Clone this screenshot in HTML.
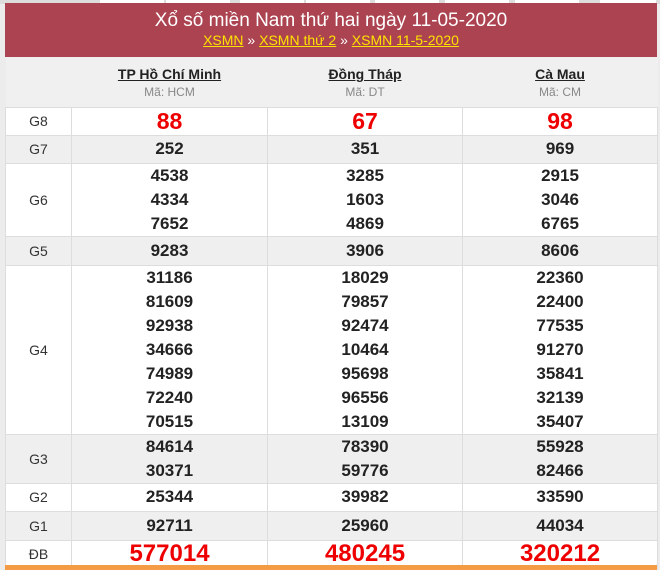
<!DOCTYPE html>
<html><head><meta charset="utf-8"><style>
*{margin:0;padding:0;box-sizing:border-box}
body{width:660px;height:570px;background:#ececec;font-family:"Liberation Sans",Arial,sans-serif;position:relative;overflow:hidden}
.tabs{position:absolute;top:0;left:0;width:660px;height:4px;background:#ddd}
.tabs i{position:absolute;top:0;height:3px;background:#fff}
.hd{position:absolute;left:5px;top:3px;width:652px;height:54px;background:#ac4350;text-align:center;color:#fff}
.hd .t{font-size:19px;line-height:20px;padding-top:8px}
.hd .l{font-size:14px;line-height:18px;color:#fff}
.hd .l a{color:#ffe300;text-decoration:underline}
table{position:absolute;left:5px;top:57px;width:652px;border-collapse:collapse;table-layout:fixed}
td{border:1px solid #ddd;text-align:center;vertical-align:middle;padding:0}
tr.g td{background:#efefef}
tr.w td{background:#fff}
td.lb{font-size:14px;color:#333;width:66px}
td.n{font-weight:bold;font-size:17px;color:#222;line-height:24px}
td.r{color:#e00;font-size:23px;font-weight:bold}
.th td{background:#f0f0f0;border:none;border-bottom:1px solid #ddd}
.th b{font-size:14px;color:#222;text-decoration:underline;display:block;line-height:18px;padding-top:3px}
.th span{font-size:12px;color:#888;line-height:16px}
.ob{position:absolute;left:5px;top:565px;width:652px;height:5px;background:#f39c45}
</style></head><body>
<div class="tabs"><i style="left:100px;width:64px"></i><i style="left:166px;width:64px"></i><i style="left:240px;width:64px"></i><i style="left:306px;width:64px"></i><i style="left:375px;width:64px"></i><i style="left:445px;width:64px"></i><i style="left:515px;width:64px"></i><i style="left:600px;width:56px"></i></div>
<div class="hd"><div class="t">Xổ số miền Nam thứ hai ngày 11-05-2020</div>
<div class="l"><a>XSMN</a> » <a>XSMN thứ 2</a> » <a>XSMN 11-5-2020</a></div></div>
<table>
<colgroup><col style="width:66px"><col style="width:196px"><col style="width:195px"><col style="width:195px"></colgroup>
<tr class="th" style="height:50px"><td></td><td><b>TP Hồ Chí Minh</b><span>Mã: HCM</span></td><td><b>Đồng Tháp</b><span>Mã: DT</span></td><td><b>Cà Mau</b><span>Mã: CM</span></td></tr>
<tr class="w" style="height:28px"><td class="lb">G8</td><td class="n r">88</td><td class="n r">67</td><td class="n r">98</td></tr>
<tr class="g" style="height:28px"><td class="lb">G7</td><td class="n">252</td><td class="n">351</td><td class="n">969</td></tr>
<tr class="w" style="height:73px"><td class="lb">G6</td><td class="n">4538<br>4334<br>7652</td><td class="n">3285<br>1603<br>4869</td><td class="n">2915<br>3046<br>6765</td></tr>
<tr class="g" style="height:29px"><td class="lb">G5</td><td class="n">9283</td><td class="n">3906</td><td class="n">8606</td></tr>
<tr class="w" style="height:166px"><td class="lb">G4</td><td class="n">31186<br>81609<br>92938<br>34666<br>74989<br>72240<br>70515</td><td class="n">18029<br>79857<br>92474<br>10464<br>95698<br>96556<br>13109</td><td class="n">22360<br>22400<br>77535<br>91270<br>35841<br>32139<br>35407</td></tr>
<tr class="g" style="height:49px"><td class="lb">G3</td><td class="n">84614<br>30371</td><td class="n">78390<br>59776</td><td class="n">55928<br>82466</td></tr>
<tr class="w" style="height:28px"><td class="lb">G2</td><td class="n">25344</td><td class="n">39982</td><td class="n">33590</td></tr>
<tr class="g" style="height:29px"><td class="lb">G1</td><td class="n">92711</td><td class="n">25960</td><td class="n">44034</td></tr>
<tr class="w" style="height:28px"><td class="lb">ĐB</td><td class="n r" style="font-size:24px">577014</td><td class="n r" style="font-size:24px">480245</td><td class="n r" style="font-size:24px">320212</td></tr>
</table>
<div class="ob"></div>
</body></html>
